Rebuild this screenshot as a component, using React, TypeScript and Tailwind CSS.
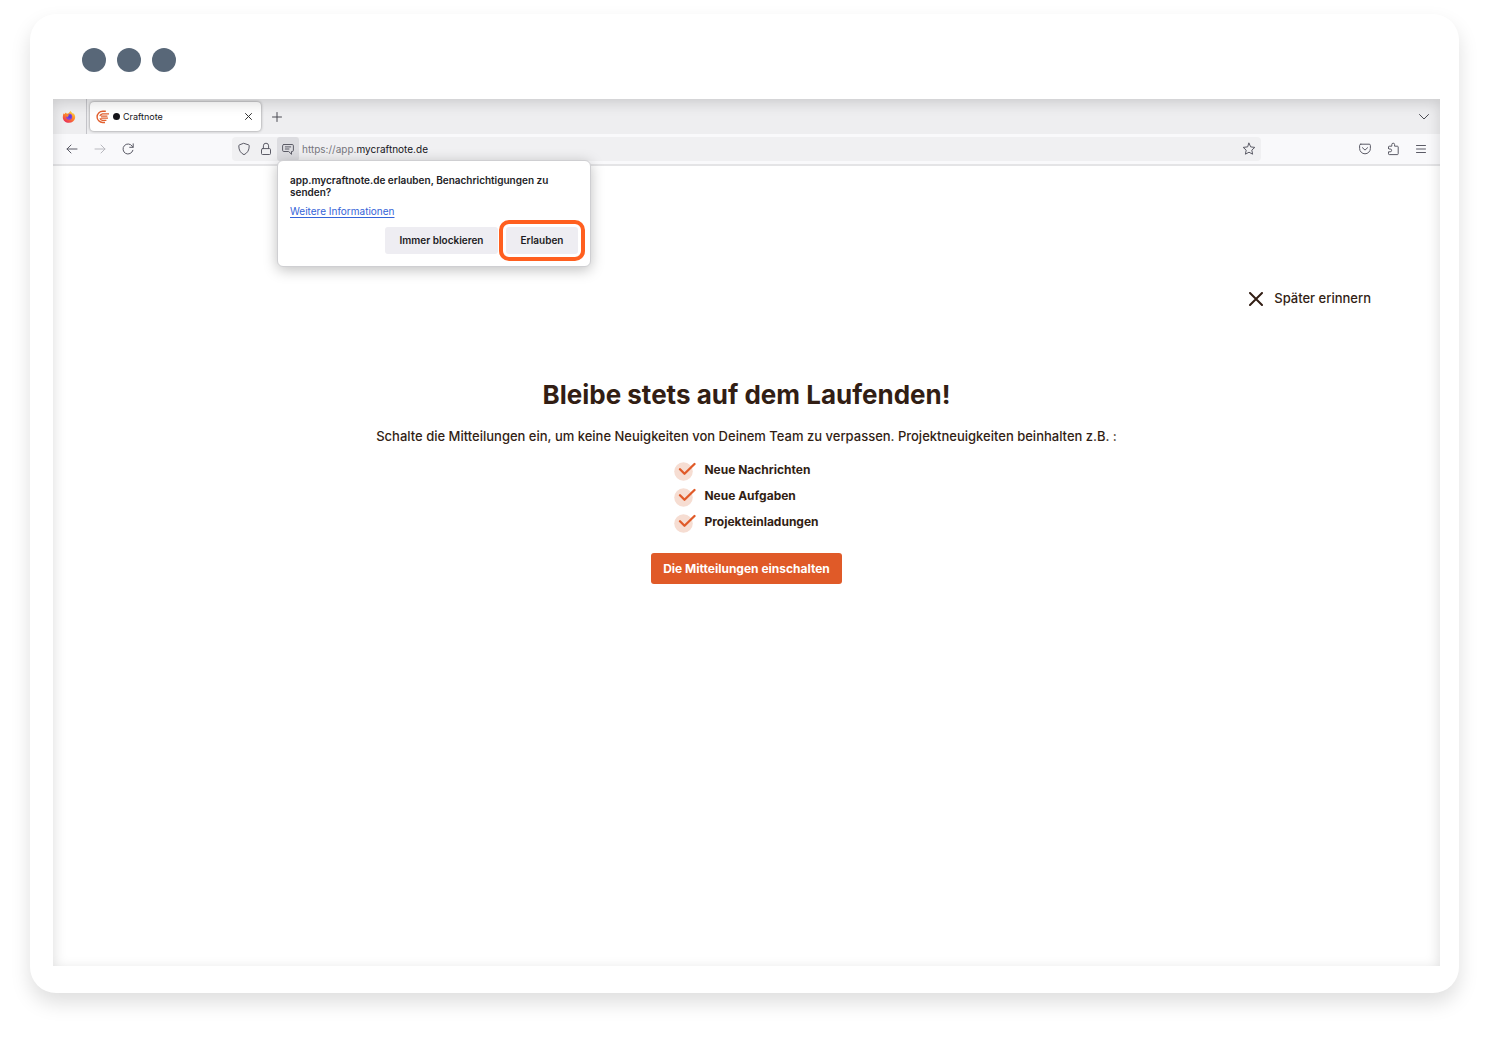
import React from 'react';

const iconProps = {
  fill: 'none',
  stroke: 'currentColor',
  strokeLinecap: 'round',
  strokeLinejoin: 'round',
  'aria-hidden': true,
} as const;

function Firefox() {
  return (
    <svg width="14" height="14" viewBox="0 0 14 14" aria-hidden="true">
      <defs>
        <linearGradient id="flame" x1="0.8" y1="0" x2="0.2" y2="1">
          <stop offset="0" stopColor="#ffe14a" />
          <stop offset="0.45" stopColor="#ff8a2a" />
          <stop offset="1" stopColor="#e8245c" />
        </linearGradient>
      </defs>
      <path d="M1.6 3.2 2.3 4.3C2.7 3.5 3.3 2.9 4 2.5L4.3 3.6 6 3.8C7 3 7.8 1.9 8.6.8 9 2.2 10.2 2.7 11 3.7L11.5 3.2C13 4.8 13.4 6.4 13.1 8 12.6 11.2 10 12.8 7 12.8 3.6 12.8.8 10.8.8 7.3.8 5.7 1.1 4.3 1.6 3.2Z" fill="url(#flame)" />
      <circle cx="7.2" cy="6.8" r="3" fill="#8a3ed8" />
      <path d="M4.3 3.8C5.6 3.6 6.4 4.4 7.5 4.8L6.4 5.9 5.7 7.1 4 6.2Z" fill="#ff8b25" />
      <circle cx="7.8" cy="6.6" r="1.5" fill="#4c48e0" />
    </svg>
  );
}

function CraftnoteLogo() {
  return (
    <svg width="14" height="14" viewBox="0 0 14 14" {...iconProps} stroke="#e2602f" strokeLinecap="butt">
      <path d="M9.8 1.3H6.7A5.6 5.6 0 0 0 6.7 12.5H9" strokeWidth="1.4" />
      <path d="M13 3.8H6.4A3.4 3.4 0 0 0 3.8 6.2M5 6.1H11.4M5 8.2H12M4 8.2A3.2 3.2 0 0 0 6.4 10.3H10.4" strokeWidth="1.2" />
    </svg>
  );
}

function Arrow({ flip = false }: { flip?: boolean }) {
  return (
    <svg width="14" height="14" viewBox="0 0 14 14" {...iconProps} className={flip ? 'rotate-180' : ''}>
      <path d="M12 7H2M6 3 2 7l4 4" />
    </svg>
  );
}

function Reload() {
  return (
    <svg width="14" height="14" viewBox="0 0 14 14" {...iconProps}>
      <path d="M11.9 8.3A5 5 0 1 1 11.2 4.2L12 5.2M12.2 1.8V5.3H8.7" />
    </svg>
  );
}

function Shield() {
  return (
    <svg width="14" height="14" viewBox="0 0 14 14" {...iconProps}>
      <path d="M7 1.4 11.7 2.9Q12.3 3.1 12.2 4C12.2 8.2 10.5 11 7 12.7 3.5 11 1.8 8.2 1.8 4Q1.7 3.1 2.3 2.9Z" />
    </svg>
  );
}

function Lock() {
  return (
    <svg width="14" height="14" viewBox="0 0 14 14" {...iconProps}>
      <rect x="2.5" y="6.6" width="9" height="5.9" rx="1" />
      <path d="M4.4 6.5V3.8a2.6 2.6 0 0 1 5.2 0V6.5" />
    </svg>
  );
}

function Message() {
  return (
    <svg width="14" height="14" viewBox="0 0 14 14" {...iconProps}>
      <path d="M2.8 2.5H11.2Q12.4 2.5 12.4 3.7V8.3Q12.4 9.5 11.2 9.5H10.5V12.3L7.7 9.5H2.8Q1.6 9.5 1.6 8.3V3.7Q1.6 2.5 2.8 2.5ZM4.3 4.9H9.7M4.3 7H8" />
    </svg>
  );
}

function Star() {
  return (
    <svg width="14" height="14" viewBox="0 0 14 14" {...iconProps}>
      <path d="M7 1.2 8.7 4.9 12.8 5.4 9.8 8.1 10.6 12.2 7 10.2 3.4 12.2 4.2 8.1 1.2 5.4 5.3 4.9Z" />
    </svg>
  );
}

function Pocket() {
  return (
    <svg width="14" height="14" viewBox="0 0 14 14" {...iconProps}>
      <path d="M2.8 2.2H11.2Q12.4 2.2 12.4 3.4V6.4A5.4 5.4 0 0 1 1.6 6.4V3.4Q1.6 2.2 2.8 2.2ZM4.4 5.7 7 8.1 9.6 5.7" />
    </svg>
  );
}

function Puzzle() {
  return (
    <svg width="14" height="14" viewBox="0 0 14 14" {...iconProps}>
      <path d="M2.5 6.6V4.9Q2.5 4.2 3.2 4.2H5.8V2.6A1.4 1.4 0 0 1 8.6 2.6V4.2H11.4Q12.2 4.2 12.2 5V11.8Q12.2 12.6 11.4 12.6H3.3Q2.5 12.6 2.5 11.8V9.8H4.2A1.4 1.4 0 0 0 4.2 7H3Q2.5 7 2.5 6.6Z" />
    </svg>
  );
}

function Cross({ className = '' }: { className?: string }) {
  return (
    <svg viewBox="0 0 14 14" {...iconProps} className={className}>
      <path d="M1 1 13 13M13 1 1 13" />
    </svg>
  );
}

function CheckBadge() {
  return (
    <svg width="22" height="20" viewBox="0 0 22 20" {...iconProps}>
      <circle cx="9.5" cy="10.5" r="9.3" fill="#f6ddd2" stroke="none" />
      <path d="M6 8.3 10.5 12.8 20.5 3" stroke="#e05a28" strokeWidth="2.3" />
    </svg>
  );
}

function TabBar() {
  return (
    <div className="flex h-[35px] items-stretch bg-[#eeeef0] text-[#4a4a52]">
      <div className="flex w-[34px] items-center justify-center border-r border-[#c4c4c9] pr-0.5">
        <Firefox />
      </div>
      <div className="my-[3px] ml-[3px] flex w-[171px] items-center rounded bg-white px-1.5 shadow-[0_0_3px_rgba(0,0,0,0.45)]">
        <CraftnoteLogo />
        <span className="ml-[3px] size-[7px] rounded-full bg-[#15141a]" />
        <span className="ml-[3px] flex-1 text-[9px] text-[#15141a]">Craftnote</span>
        <button type="button" aria-label="Tab schließen" className="mr-[3px]">
          <Cross className="size-[7px] stroke-2 text-[#333]" />
        </button>
      </div>
      <button type="button" aria-label="Neuer Tab" className="ml-2.5">
        <svg width="12" height="12" viewBox="0 0 12 12" {...iconProps}>
          <path d="M6 1.5V10.5M1.5 6H10.5" />
        </svg>
      </button>
      <button type="button" aria-label="Alle Tabs anzeigen" className="mr-2.5 ml-auto">
        <svg width="12" height="12" viewBox="0 0 12 12" {...iconProps}>
          <path d="M1.5 3.5 6 8 10.5 3.5" />
        </svg>
      </button>
    </div>
  );
}

function PermissionPopup() {
  return (
    <div
      role="dialog"
      aria-label="Benachrichtigungen erlauben"
      className="absolute top-[23px] left-0 z-10 w-[314px] rounded-md border border-[#cfcfd2] bg-white px-3 pt-[13px] pb-3 shadow-[0_3px_14px_rgba(0,0,0,0.25)]"
    >
      <p className="text-[10px] leading-3 font-semibold text-[#222226]">
        app.mycraftnote.de erlauben, Benachrichtigungen zu senden?
      </p>
      <a href="#info" className="mt-1.5 block text-[10px] leading-[14px] text-[#3564d8] underline underline-offset-2">
        Weitere Informationen
      </a>
      <div className="mt-[9px] flex justify-end gap-2 text-[10px] font-semibold text-[#1c1b22]">
        <button type="button" className="h-[27px] w-[113px] rounded-[3px] bg-[#eeedf2]">
          Immer blockieren
        </button>
        <button
          type="button"
          className="relative h-[27px] w-[72px] rounded-[3px] bg-[#eeedf2] after:absolute after:-inset-[7px] after:rounded-[10px] after:border-4 after:border-[#ff5f1f] after:shadow-[inset_0_0_0_2px_white]"
        >
          Erlauben
        </button>
      </div>
    </div>
  );
}

function NavBar() {
  return (
    <div className="flex h-8 items-center border-b-2 border-[#e4e4e6] bg-[#f9f9fb] text-[#5b5b66]">
      <div className="flex w-[179px] items-center gap-3.5 pl-3">
        <button type="button" aria-label="Zurück"><Arrow /></button>
        <button type="button" aria-label="Vor" className="text-[#b9b9bf]"><Arrow flip /></button>
        <button type="button" aria-label="Neu laden"><Reload /></button>
      </div>
      <div className="flex h-6 min-w-0 flex-1 items-center rounded bg-[#f0f0f2] pl-[5px]">
        <Shield />
        <span className="ml-2"><Lock /></span>
        <div className="relative ml-1 h-full">
          <button type="button" aria-label="Benachrichtigungen" className="flex h-full w-[22px] items-center justify-center rounded-[3px] bg-[#dcdce0]">
            <Message />
          </button>
          <PermissionPopup />
        </div>
        <p className="ml-[3px] flex-1 text-[10px] text-[#77777d]">
          https://app.<span className="text-[#15141a]">mycraftnote.de</span>
        </p>
        <button type="button" aria-label="Lesezeichen setzen" className="mr-[5px]"><Star /></button>
      </div>
      <div className="flex w-[179px] items-center justify-end gap-3.5 pr-3">
        <button type="button" aria-label="Pocket"><Pocket /></button>
        <button type="button" aria-label="Erweiterungen"><Puzzle /></button>
        <button type="button" aria-label="Menü">
          <svg width="14" height="14" viewBox="0 0 14 14" {...iconProps}>
            <path d="M2.5 3.5H11.5M2.5 7H11.5M2.5 10.5H11.5" />
          </svg>
        </button>
      </div>
    </div>
  );
}

function Content() {
  return (
    <main className="flex min-h-[800px] flex-col bg-white text-[#321e14]">
      <button type="button" className="mt-[121px] mr-[69px] flex h-6 items-center gap-[11px] self-end text-[13px] font-medium">
        <Cross className="size-[14px] stroke-2" />
        Später erinnern
      </button>
      <div className="mt-[66px] flex flex-col items-center">
        <h1 className="text-[26px] leading-9 font-bold">Bleibe stets auf dem Laufenden!</h1>
        <p className="mt-[13px] text-[13px] leading-5 font-medium">
          Schalte die Mitteilungen ein, um keine Neuigkeiten von Deinem Team zu verpassen. Projektneuigkeiten beinhalten z.B. :
        </p>
        <ul className="mt-[15px] text-xs leading-5 font-bold">
          {['Neue Nachrichten', 'Neue Aufgaben', 'Projekteinladungen'].map((label) => (
            <li key={label} className="flex h-[26px] items-start gap-2">
              <CheckBadge />
              <span className="-mt-px">{label}</span>
            </li>
          ))}
        </ul>
        <button type="button" className="mt-3.5 h-[31px] rounded-[3px] bg-[#e05a28] px-3 text-xs font-bold text-white">
          Die Mitteilungen einschalten
        </button>
      </div>
    </main>
  );
}

export default function App() {
  return (
    <div className="min-h-screen bg-white px-[30px] pt-3.5 pb-[45px] font-['Inter',sans-serif]">
      <div className="rounded-[26px] bg-white pr-[19px] pb-[27px] pl-[23px] shadow-[0_10px_20px_rgba(0,0,0,0.13)]">
        <div className="flex h-[85px] gap-[11px] pt-[34px] pl-[29px]">
          <span className="size-6 rounded-full bg-[#586778]" />
          <span className="size-6 rounded-full bg-[#586778]" />
          <span className="size-6 rounded-full bg-[#586778]" />
        </div>
        <div className="relative">
          <TabBar />
          <NavBar />
          <Content />
          <div className="pointer-events-none absolute inset-0 shadow-[inset_0_4px_14px_rgba(0,0,0,0.15)]" />
        </div>
      </div>
    </div>
  );
}
